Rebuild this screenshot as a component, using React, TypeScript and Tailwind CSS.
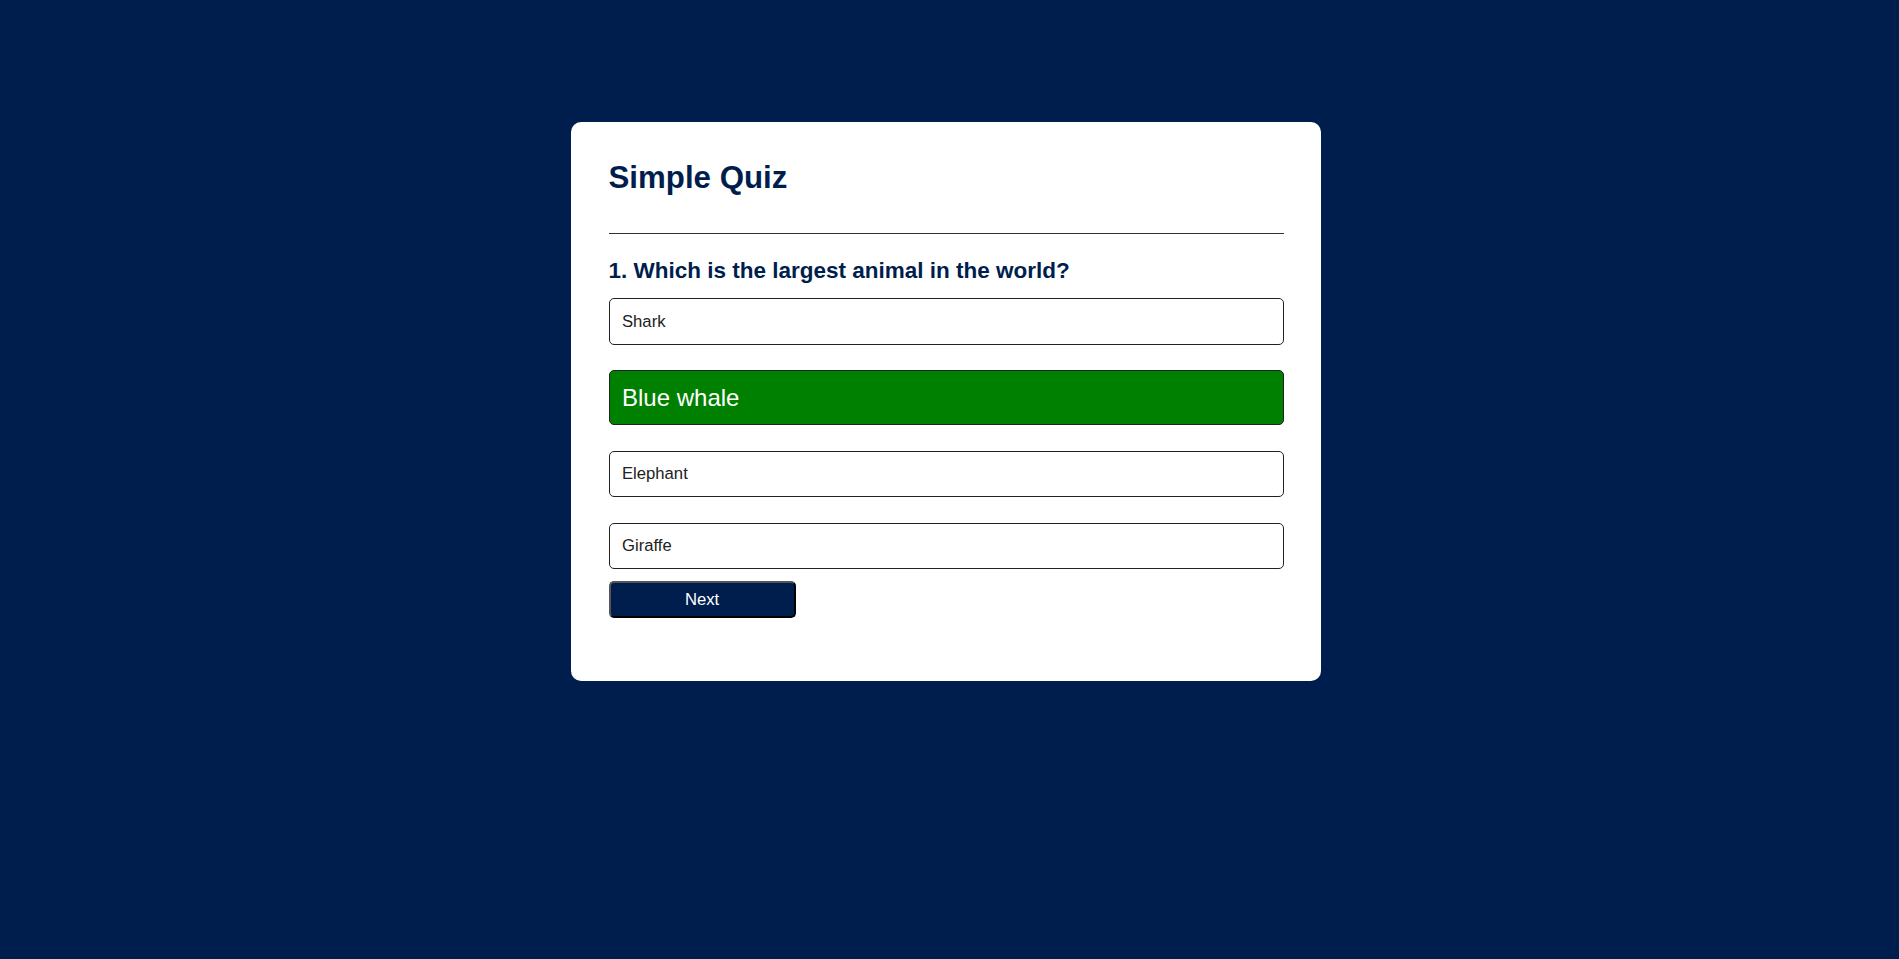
import React, { useState } from 'react';

const answers = [
  { text: 'Shark', correct: false },
  { text: 'Blue whale', correct: true },
  { text: 'Elephant', correct: false },
  { text: 'Giraffe', correct: false },
];

export default function App() {
  const [picked] = useState<number>(1);

  return (
    <div className="min-h-screen bg-[#001e4d] pt-[122px] font-['Liberation_Sans',Arial,sans-serif]">
      <div className="ml-[571px] w-[750px] rounded-[10px] bg-white px-[37.5px] pt-[37.5px] pb-[37.5px]">
        <h1 className="border-b border-[#333] pb-[37.5px] text-[31.25px] font-bold leading-[36px] text-[#001e4d]">
          Simple Quiz
        </h1>

        <div className="pt-[24px] pb-[25px]">
          <h2 className="text-[22.5px] font-bold leading-[26px] text-[#001e4d]">
            1. Which is the largest animal in the world?
          </h2>

          {/* Answers */}
          <div className="mt-[14px] flex flex-col gap-[25.5px]">
            {answers.map((a, i) =>
              i === picked && a.correct ? (
                <button
                  key={a.text}
                  className="h-[55px] w-full rounded-[5px] border border-[#222] bg-[#008000] px-[12.5px] text-left text-[24px] leading-[28px] text-white"
                >
                  {a.text}
                </button>
              ) : (
                <button
                  key={a.text}
                  className="h-[46.5px] w-full rounded-[5px] border border-[#222] bg-white px-[12.5px] text-left text-[16.67px] leading-[19px] text-[#222]"
                >
                  {a.text}
                </button>
              )
            )}
          </div>

          <button className="mt-[12px] block h-[37px] w-[187px] rounded-[5px] border-2 border-t-[#555] border-l-[#555] border-r-black border-b-black bg-[#001e4d] text-center text-[16.67px] leading-[19px] text-white">
            Next
          </button>
        </div>
      </div>
    </div>
  );
}
